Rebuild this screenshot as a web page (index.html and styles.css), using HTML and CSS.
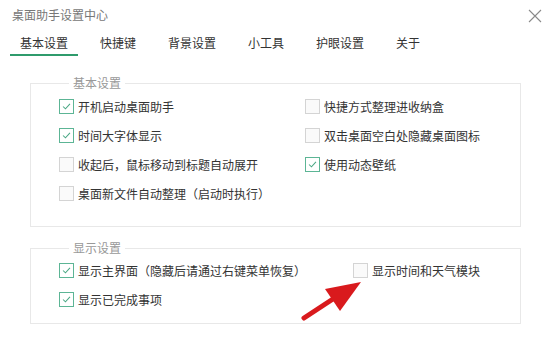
FILE: index.html
```html
<!DOCTYPE html>
<html lang="zh-CN">
<head>
    <meta charset="UTF-8">
    <meta name="viewport" content="width=device-width, initial-scale=1.0">
    <title>桌面助手设置中心</title>
    <link rel="stylesheet" href="styles.css">
</head>
<body>

    <div class="window-header">
        <div class="window-title">桌面助手设置中心</div>
        <button class="close-button" type="button" aria-label="关闭">
            <svg width="14" height="14" viewBox="0 0 14 14">
                <path d="M1 1 L13 13 M13 1 L1 13" stroke="#8a8a8a" stroke-width="1.1" fill="none"/>
            </svg>
        </button>
    </div>

    <!-- Tabs -->
    <div class="tabs">
        <div class="tab active">基本设置</div>
        <div class="tab">快捷键</div>
        <div class="tab">背景设置</div>
        <div class="tab">小工具</div>
        <div class="tab">护眼设置</div>
        <div class="tab">关于</div>
    </div>

    <fieldset class="group group-basic">
        <legend>基本设置</legend>
        <div class="options">
            <label class="option"><span class="box checked"><svg viewBox="0 0 15 15"><path d="M3.5 7.5 L6.3 10.2 L11.5 4.5"/></svg></span>开机启动桌面助手</label>
            <label class="option"><span class="box"></span>快捷方式整理进收纳盒</label>
            <label class="option"><span class="box checked"><svg viewBox="0 0 15 15"><path d="M3.5 7.5 L6.3 10.2 L11.5 4.5"/></svg></span>时间大字体显示</label>
            <label class="option"><span class="box"></span>双击桌面空白处隐藏桌面图标</label>
            <label class="option"><span class="box"></span>收起后，鼠标移动到标题自动展开</label>
            <label class="option"><span class="box checked"><svg viewBox="0 0 15 15"><path d="M3.5 7.5 L6.3 10.2 L11.5 4.5"/></svg></span>使用动态壁纸</label>
            <label class="option"><span class="box"></span>桌面新文件自动整理（启动时执行）</label>
        </div>
    </fieldset>

    <fieldset class="group group-display">
        <legend>显示设置</legend>
        <div class="options options-wide">
            <label class="option"><span class="box checked"><svg viewBox="0 0 15 15"><path d="M3.5 7.5 L6.3 10.2 L11.5 4.5"/></svg></span>显示主界面（隐藏后请通过右键菜单恢复）</label>
            <label class="option"><span class="box"></span>显示时间和天气模块</label>
            <label class="option"><span class="box checked"><svg viewBox="0 0 15 15"><path d="M3.5 7.5 L6.3 10.2 L11.5 4.5"/></svg></span>显示已完成事项</label>
        </div>
    </fieldset>

    <!-- annotation arrow over the page -->
    <svg class="pointer-arrow" width="550" height="337" viewBox="0 0 550 337">
        <line x1="304" y1="318" x2="336" y2="297" stroke="#d91a1d" stroke-width="5" stroke-linecap="round"/>
        <polygon points="361,282 325,289 340,311" fill="#d91a1d"/>
    </svg>

</body>
</html>
```

FILE: styles.css
```css
body {
    font-family: "Noto Sans CJK SC", "Noto Sans", sans-serif;
    font-size: 12px;
    color: #333;
    margin: 0;
    background: #fff;
    width: 550px;
    height: 337px;
    overflow: hidden;
    position: relative;
}
.window-header {
    display: flex;
    justify-content: space-between;
    align-items: flex-start;
    padding: 8px 8px 0 12px;
}
.window-title {
    line-height: 14px;
    color: #777;
}
.close-button {
    border: none;
    background: none;
    padding: 0;
    margin: 1px 0 0;
    width: 14px;
    height: 14px;
    cursor: pointer;
}
.close-button svg { display: block; }

/* --- Tabs --- */
.tabs {
    display: flex;
    gap: 12px;
    margin-top: 8px;
    padding-left: 10px;
}
.tab {
    padding: 4px 10px 3px;
    line-height: 16px;
    color: #333;
    border-bottom: 2px solid transparent;
}
.tab.active { border-bottom-color: #2f9b6c; }

/* --- Groups --- */
.group {
    margin: 20px 29px 0 30px;
    padding: 2px 0 18px 28px;
    border: 1px solid #e8e8e8;
    min-width: 0;
}
.group legend {
    margin-left: 10px;
    padding: 0 4px;
    line-height: 14px;
    color: #999;
}
.group-display {
    margin-top: 14px;
    padding-top: 1px;
    padding-bottom: 9px;
}
.options {
    display: grid;
    grid-template-columns: 246px 1fr;
}
.options-wide { grid-template-columns: 294px 1fr; }
.option {
    display: flex;
    align-items: center;
    gap: 4px;
    height: 29px;
    white-space: nowrap;
}
.box {
    width: 15px;
    height: 15px;
    box-sizing: border-box;
    border: 1px solid #d4d4d4;
    background: #fafafa;
    flex-shrink: 0;
}
.box.checked {
    border-color: #5cb595;
    background: #fff;
}
.box svg {
    display: block;
    width: 13px;
    height: 13px;
}
.box svg path {
    fill: none;
    stroke: #4aa784;
    stroke-width: 1.2;
}

.pointer-arrow {
    position: absolute;
    left: 0;
    top: 0;
    pointer-events: none;
}
```
